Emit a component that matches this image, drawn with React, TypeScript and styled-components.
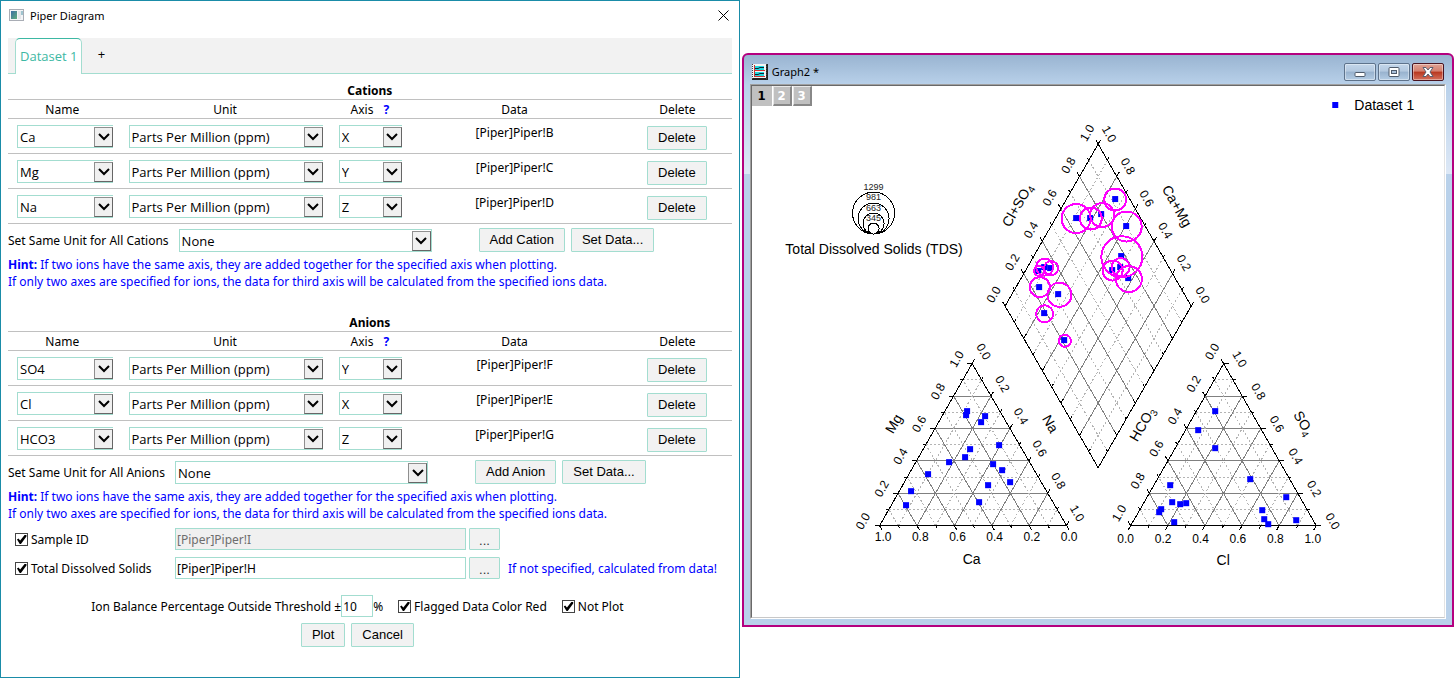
import React from "react";
import styled, { createGlobalStyle } from "styled-components";

const ui = `"Noto Sans", "Open Sans", sans-serif`;
const field = `"Open Sans", "Noto Sans", sans-serif`;
const arial = `"Liberation Sans", Arial, sans-serif`;
const mint = "#a3ddd0";

const GlobalStyle = createGlobalStyle`
  *, *::before, *::after { box-sizing: border-box; }
  body { margin: 0; background: #fff; color: #000; font: 12px/17px ${ui}; }
`;

/* ---------- shell ---------- */

const Desktop = styled.main`
  display: flex;
  align-items: flex-start;
  gap: 2px;
`;

const Dialog = styled.section`
  flex: 740 1 0;
  min-width: 0;
  min-height: 100vh;
  border: 1px solid #1a8ca8;
  padding: 0 7px 24px;
`;

const DialogTitle = styled.header`
  display: flex;
  align-items: center;
  gap: 6px;
  height: 28px;
  margin-bottom: 9px;
  padding-left: 1px;
  font-size: 11px;
`;

const DialogName = styled.h1`
  flex: 1;
  margin: 0;
  font: inherit;
`;

const CloseButton = styled.button`
  width: 17px;
  height: 17px;
  padding: 3px;
  border: 0;
  background: none;
  svg { display: block; }
`;

const Tabs = styled.nav`
  display: flex;
  height: 36px;
  padding-left: 7px;
  background: #f2f2f2;
  border-bottom: 1px solid ${mint};
`;

const Tab = styled.button`
  height: 36px;
  padding: 0 4px;
  border: 1px solid ${mint};
  border-top-color: #3db8a3;
  border-bottom: 0;
  border-radius: 5px 5px 0 0;
  background: #fff;
  color: #3db8a3;
  font: 13px/17px ${field};
`;

const AddTab = styled.button`
  width: 38px;
  height: 32px;
  padding: 0;
  border: 0;
  background: none;
  font: 13px/17px ${field};
`;

/* ---------- form controls ---------- */

const Button = styled.button`
  height: 24px;
  padding: 0 10px;
  border: 1px solid ${mint};
  border-radius: 1px;
  background: #f2f2f2;
  color: #000;
  font: 13px/20px ${arial};
  white-space: nowrap;
`;

const BrowseButton = styled(Button)`
  width: 31px;
  height: 22px;
  margin-left: 3px;
  padding: 2px 0 0;
  line-height: 20px;
  color: #333;
`;

const SelectFrame = styled.span<{ $width: number; $closed?: boolean }>`
  position: relative;
  display: block;
  width: ${(p) => p.$width}px;
  height: 23px;
  border: 1px solid ${mint};
  border-right-width: ${(p) => (p.$closed ? 1 : 0)}px;
  background: #fff;
`;

const NativeSelect = styled.select`
  appearance: none;
  display: block;
  width: 100%;
  height: 21px;
  margin: 0;
  padding: 2px 20px 0 2px;
  border: 0;
  background: transparent;
  color: #000;
  font: 13px/19px ${field};
`;

const Arrow = styled.span`
  position: absolute;
  top: 1px;
  right: 0;
  display: grid;
  place-items: center;
  width: 19px;
  height: 20px;
  border: 1px solid;
  border-color: #8f8f8f #666 #666 #8f8f8f;
  background: #f0f0f0;
  pointer-events: none;
`;

const TextInput = styled.input`
  width: 100%;
  height: 22px;
  padding: 1px 1px 0;
  border: 1px solid ${mint};
  border-radius: 0;
  background: #fff;
  color: #000;
  font: 12px/18px ${ui};
  &:disabled { background: #f0f0f0; color: #6d6d6d; }
`;

const CheckLabel = styled.label`
  display: flex;
  align-items: center;
  gap: 3px;
  white-space: nowrap;
`;

const Check = styled.input.attrs({ type: "checkbox" })`
  appearance: none;
  flex: none;
  width: 13px;
  height: 13px;
  margin: 1px 0 0;
  border: 1px solid #444;
  background: #fff;
  &:checked::after {
    content: "";
    display: block;
    width: 11px;
    height: 11px;
    background: #000;
    clip-path: polygon(9% 50%, 22% 42%, 38% 60%, 78% 9%, 95% 9%, 95% 22%, 45% 91%, 34% 91%);
  }
`;

/* ---------- ion tables ---------- */

const Section = styled.section`
  margin-top: 8px;
  & + & { margin-top: 24px; }
`;

const IonTable = styled.table`
  width: 100%;
  table-layout: fixed;
  border-collapse: collapse;
  caption {
    height: 17px;
    font-weight: 700;
  }
`;

const HeadCell = styled.th<{ $share: number }>`
  width: ${(p) => p.$share}%;
  height: 19px;
  padding: 0;
  border: 1px solid #c0c0c0;
  border-width: 1px 0;
  font-weight: 400;
`;

const Cell = styled.td<{ $indent?: number; $top?: boolean }>`
  height: 35px;
  padding: ${(p) => (p.$top ? 5 : 0)}px 0 0 ${(p) => p.$indent ?? 0}px;
  border-bottom: 1px solid #c0c0c0;
  text-align: ${(p) => (p.$indent ? "left" : "center")};
  vertical-align: ${(p) => (p.$top ? "top" : "middle")};
`;

const DeleteCell = styled(Cell)`
  padding: 3px 1px 0 0;
  button { display: block; margin: 0 auto; }
`;

const Help = styled.a`
  margin-left: 10px;
  color: #00f;
  font-weight: 700;
  text-decoration: none;
`;

const SameUnit = styled.div`
  display: flex;
  align-items: center;
  height: 24px;
  margin-top: 4px;
  white-space: nowrap;
`;

const SameUnitLabel = styled.label`
  margin-right: 10px;
`;

const ButtonPair = styled.div`
  display: flex;
  gap: 6px;
  margin-left: 47px;
`;

const Hint = styled.p`
  margin: 4px 0 0;
  color: #00f;
  white-space: nowrap;
`;

/* ---------- lower form ---------- */

const Sources = styled.div`
  display: grid;
  gap: 7px;
  margin: 6px 0 16px;
  padding-left: 7px;
`;

const SourceRow = styled.div`
  display: grid;
  grid-template-columns: 160px 291px 34px auto;
  align-items: center;
  height: 22px;
`;

const Note = styled.span`
  padding-left: 8px;
  color: #00f;
  white-space: nowrap;
`;

const Options = styled.div`
  display: flex;
  justify-content: center;
  align-items: center;
  gap: 15px;
  padding-right: 25px;
`;

const Threshold = styled.label`
  display: flex;
  align-items: center;
  white-space: nowrap;
  input { width: 32px; }
`;

const Actions = styled.footer`
  display: flex;
  justify-content: center;
  gap: 6px;
  margin-top: 6px;
  padding-right: 25px;
`;

/* ---------- graph window ---------- */

const GraphWindow = styled.section`
  flex: 712 1 0;
  min-width: 0;
  margin-top: 53px;
  padding: 0 6px 6px;
  border: 2px solid #b4007f;
  border-radius: 6px 6px 0 0;
  background: linear-gradient(#99b4d1 0, #b9d1ea 30px, #dde8f6 119px, #b9d1ea 119px);
`;

const GraphTitle = styled.header`
  display: flex;
  align-items: center;
  gap: 2px;
  height: 29px;
  padding: 4px 2px 0;
  font-size: 11px;
  svg { display: block; }
`;

const GraphName = styled.h2`
  flex: 1;
  margin: 0 0 0 2px;
  font: inherit;
`;

const FrameButton = styled.button<{ $danger?: boolean }>`
  display: grid;
  place-items: center;
  width: 32px;
  height: 18px;
  padding: 0;
  border: 1px solid ${(p) => (p.$danger ? "#4a1420" : "#5e738c")};
  border-radius: 2px;
  background: ${(p) =>
    p.$danger
      ? "linear-gradient(#e0a294 0, #d4806f 45%, #b8371f 50%, #d4705c 100%)"
      : "linear-gradient(#c3d6ea 0, #b3c8df 45%, #98b2ce 50%, #b4cce4 100%)"};
  box-shadow: inset 0 0 0 1px rgba(255, 255, 255, 0.4);
`;

const Sheet = styled.div`
  position: relative;
  border: 1px solid;
  border-color: #a0a0a0 #fff #fff #a0a0a0;
  background: #fff;
`;

const SheetInner = styled.div`
  border: 1px solid;
  border-color: #696969 #e3e3e3 #c8c8c8 #696969;
`;

const Layers = styled.div`
  position: absolute;
  top: 1px;
  left: 1px;
  display: flex;
  gap: 1px;
`;

const Layer = styled.button<{ $active?: boolean }>`
  width: ${(p) => (p.$active ? 20 : 19)}px;
  height: 20px;
  padding: 0;
  border: solid;
  border-width: ${(p) => (p.$active ? "0" : "1px 2px 2px 1px")};
  border-color: #e8e8e8 #888 #888 #e8e8e8;
  background: #c0c0c0;
  color: ${(p) => (p.$active ? "#000" : "#fff")};
  font: 700 13px/16px "DejaVu Sans Condensed", "DejaVu Sans", sans-serif;
`;

const Chart = styled.svg`
  display: block;
  width: 100%;
  height: auto;
  font-family: ${arial};
`;

/* ---------- data ---------- */

type Ion = [name: string, axis: string, column: string];
const cations: Ion[] = [["Ca", "X", "B"], ["Mg", "Y", "C"], ["Na", "Z", "D"]];
const anions: Ion[] = [["SO4", "Y", "F"], ["Cl", "X", "E"], ["HCO3", "Z", "G"]];

type Pt = [number, number];

const cationPoints: Pt[] = [
  [967, 411], [966, 415], [985, 416], [981, 422], [999, 445], [970, 449], [965, 457], [949, 462],
  [993, 464], [1002, 470], [928, 474], [1010, 482], [988, 485], [911, 491], [979, 502], [906, 505],
];
const anionPoints: Pt[] = [
  [1215, 411], [1198, 430], [1215, 448], [1250, 479], [1170, 485], [1286, 497], [1172, 502], [1180, 504],
  [1186, 503], [1161, 509], [1159, 512], [1262, 510], [1174, 522], [1264, 519], [1268, 524], [1296, 520],
];
const diamondPoints: Pt[] = [
  [1115, 199], [1076, 218], [1090, 218], [1101, 214], [1126, 226], [1121, 256], [1120, 267], [1112, 270],
  [1128, 278], [1044, 267], [1050, 268], [1038, 271], [1039, 287], [1058, 294], [1044, 313], [1064, 340],
];
const bubbles: [number, number, number][] = [
  [1115, 199.5, 11], [1076, 218.5, 14.5], [1090.7, 218.5, 11], [1102, 215, 12], [1126.5, 226.5, 15],
  [1121.7, 256.7, 20.5], [1120.5, 267, 9], [1112.5, 270.5, 10], [1128.7, 279, 13], [1044.5, 267, 8.5],
  [1051, 268, 7], [1039, 271, 5], [1039.7, 287, 10], [1059.3, 294.7, 12], [1044.5, 313.7, 8.5], [1064.7, 340.7, 6],
];

/* ---------- chart ---------- */

const mix = (a: Pt, b: Pt, t: number): Pt => [a[0] + (b[0] - a[0]) * t, a[1] + (b[1] - a[1]) * t];
const steps = [1, 2, 3, 4, 5, 6, 7, 8, 9];
const allSteps = [0, ...steps, 10];
const seg = (a: Pt, b: Pt) => `M${a[0]} ${a[1]}L${b[0]} ${b[1]}`;

/* Lines joining equal fractions of edge a0-a1 and edge b0-b1. */
function Grid({ a0, a1, b0, b1 }: { a0: Pt; a1: Pt; b0: Pt; b1: Pt }) {
  return (
    <g shapeRendering="crispEdges" fill="none">
      {steps.map((i) => (
        <path
          key={i}
          d={seg(mix(a0, a1, i / 10), mix(b0, b1, i / 10))}
          stroke={i % 2 ? "#b4b4b4" : "#808080"}
          strokeDasharray={i % 2 ? "2 2" : undefined}
        />
      ))}
    </g>
  );
}

function Ticks({ from, to, dir }: { from: Pt; to: Pt; dir: Pt }) {
  return (
    <path
      shapeRendering="crispEdges"
      stroke="#000"
      d={allSteps
        .map((i) => {
          const p = mix(from, to, i / 10);
          const len = i % 2 ? 3 : 5;
          return seg(p, [p[0] + dir[0] * len, p[1] + dir[1] * len]);
        })
        .join("")}
    />
  );
}

function Scale({ from, to, angle, reverse }: { from: Pt; to: Pt; angle: number; reverse?: boolean }) {
  return (
    <g fontSize="12" textAnchor="middle">
      {[0, 2, 4, 6, 8, 10].map((i) => {
        const [x, y] = mix(from, to, i / 10);
        return (
          <text key={i} transform={`translate(${x} ${y}) rotate(${angle})`} y="4">
            {((reverse ? 10 - i : i) / 10).toFixed(1)}
          </text>
        );
      })}
    </g>
  );
}

function AxisTitle({ at, angle, sub, children }: { at: Pt; angle: number; sub?: string; children: string }) {
  return (
    <text fontSize="14" textAnchor="middle" transform={`translate(${at[0]} ${at[1]}) rotate(${angle})`} y="5">
      {children}
      {sub && <tspan fontSize="10" dy="3">{sub}</tspan>}
    </text>
  );
}

function Markers({ points }: { points: Pt[] }) {
  return (
    <g fill="#00f">
      {points.map(([x, y], i) => (
        <rect key={i} x={x - 3} y={y - 3} width="6" height="6" />
      ))}
    </g>
  );
}

const upLeft: Pt = [-0.5, -0.866];
const upRight: Pt = [0.5, -0.866];
const downLeft: Pt = [-0.5, 0.866];
const downRight: Pt = [0.5, 0.866];

function Outline({ points }: { points: Pt[] }) {
  return <polygon points={points.join(" ")} fill="none" stroke="#000" shapeRendering="crispEdges" />;
}

function PiperChart() {
  const cl: Pt = [879.5, 525.5], cr: Pt = [1066.5, 525.5], ct: Pt = [972, 363.5];
  const al: Pt = [1130.5, 525.5], ar: Pt = [1316, 525.5], at: Pt = [1223.5, 363.5];
  const dt: Pt = [1098, 144], dl: Pt = [1005, 306], dr: Pt = [1191, 306], db: Pt = [1098, 467.5];
  return (
    <Chart viewBox="752 86 692 531" role="img" aria-label="Piper diagram of Dataset 1">
      <Grid a0={cl} a1={ct} b0={cr} b1={ct} />
      <Grid a0={cl} a1={cr} b0={ct} b1={cr} />
      <Grid a0={cr} a1={cl} b0={ct} b1={cl} />
      <Grid a0={al} a1={at} b0={ar} b1={at} />
      <Grid a0={al} a1={ar} b0={at} b1={ar} />
      <Grid a0={ar} a1={al} b0={at} b1={al} />
      <Grid a0={dt} a1={dl} b0={dr} b1={db} />
      <Grid a0={dt} a1={dr} b0={dl} b1={db} />
      <Outline points={[cl, ct, cr]} />
      <Outline points={[al, at, ar]} />
      <Outline points={[dt, dr, db, dl]} />
      <Ticks from={cl} to={ct} dir={[-1, 0]} />
      <Ticks from={ct} to={cr} dir={upRight} />
      <Ticks from={cl} to={cr} dir={downRight} />
      <Ticks from={al} to={at} dir={upLeft} />
      <Ticks from={at} to={ar} dir={[1, 0]} />
      <Ticks from={al} to={ar} dir={downLeft} />
      <Ticks from={dt} to={dl} dir={upLeft} />
      <Ticks from={dt} to={dr} dir={upRight} />
      <Ticks from={dl} to={db} dir={upRight} />
      <Ticks from={dr} to={db} dir={upLeft} />

      <Scale from={[1087, 133]} to={[993.5, 294.5]} angle={-60} reverse />
      <Scale from={[1109, 134]} to={[1202.5, 295]} angle={60} reverse />
      <Scale from={[956.5, 359]} to={[863, 521]} angle={-60} reverse />
      <Scale from={[983.5, 351.5]} to={[1077, 513]} angle={60} />
      <Scale from={[883, 537]} to={[1069, 537]} angle={0} reverse />
      <Scale from={[1212, 351.5]} to={[1119, 513]} angle={-60} />
      <Scale from={[1239.5, 359]} to={[1332.5, 521]} angle={60} reverse />
      <Scale from={[1125.5, 539]} to={[1312.5, 539]} angle={0} />

      <AxisTitle at={[1017, 205]} angle={-60} sub="4">Cl+SO</AxisTitle>
      <AxisTitle at={[1177, 206]} angle={60}>Ca+Mg</AxisTitle>
      <AxisTitle at={[893.5, 423.5]} angle={-60}>Mg</AxisTitle>
      <AxisTitle at={[1050.5, 423.5]} angle={60}>Na</AxisTitle>
      <AxisTitle at={[971.5, 559]} angle={0}>Ca</AxisTitle>
      <AxisTitle at={[1142, 424]} angle={-60} sub="3">HCO</AxisTitle>
      <AxisTitle at={[1303.5, 423]} angle={60} sub="4">SO</AxisTitle>
      <AxisTitle at={[1223, 560]} angle={0}>Cl</AxisTitle>

      <Markers points={cationPoints} />
      <Markers points={anionPoints} />
      <Markers points={diamondPoints} />
      <g fill="none" stroke="#f0f" strokeWidth="2" shapeRendering="crispEdges">
        {bubbles.map(([x, y, r], i) => <circle key={i} cx={x} cy={y} r={r} />)}
      </g>

      <g fill="none" stroke="#000" shapeRendering="crispEdges">
        {[21, 15.5, 10.5, 5.5].map((r) => <circle key={r} cx="873.5" cy={234 - r} r={r} />)}
      </g>
      <g fontSize="9" textAnchor="middle" fill="#222">
        {["1299", "981", "663", "345"].map((t, i) => <text key={t} x="873.5" y={190 + i * 10.3}>{t}</text>)}
      </g>
      <text x="874" y="254" fontSize="14" textAnchor="middle">Total Dissolved Solids (TDS)</text>

      <Markers points={[[1335, 105]]} />
      <text x="1354" y="110" fontSize="14">Dataset 1</text>
    </Chart>
  );
}

/* ---------- pieces ---------- */

function Select({ value, label, id, width, closed }: { value: string; label?: string; id?: string; width: number; closed?: boolean }) {
  return (
    <SelectFrame $width={width} $closed={closed}>
      <NativeSelect id={id} aria-label={label} defaultValue={value}>
        <option>{value}</option>
      </NativeSelect>
      <Arrow>
        <svg width="12" height="8" viewBox="0 0 12 8" fill="none" stroke="#000" strokeWidth="2">
          <path d="M1 1l5 5 5-5" />
        </svg>
      </Arrow>
    </SelectFrame>
  );
}

function IonSection({ title, kind, ions }: { title: string; kind: string; ions: Ion[] }) {
  const id = `unit-${kind}`;
  return (
    <Section>
      <IonTable>
        <caption>{title}</caption>
        <thead>
          <tr>
            <HeadCell $share={15}>Name</HeadCell>
            <HeadCell $share={30}>Unit</HeadCell>
            <HeadCell $share={10}>Axis<Help href="#axis">?</Help></HeadCell>
            <HeadCell $share={30}>Data</HeadCell>
            <HeadCell $share={15}>Delete</HeadCell>
          </tr>
        </thead>
        <tbody>
          {ions.map(([name, axis, column]) => (
            <tr key={name}>
              <Cell $indent={9}><Select label="Name" value={name} width={96} /></Cell>
              <Cell $indent={12}><Select label="Unit" value="Parts Per Million (ppm)" width={194} /></Cell>
              <Cell $indent={5}><Select label="Axis" value={axis} width={63} /></Cell>
              <Cell $top>[Piper]Piper!{column}</Cell>
              <DeleteCell><Button>Delete</Button></DeleteCell>
            </tr>
          ))}
        </tbody>
      </IonTable>
      <SameUnit>
        <SameUnitLabel htmlFor={id}>Set Same Unit for All {title}</SameUnitLabel>
        <Select id={id} value="None" width={253} closed />
        <ButtonPair>
          <Button>Add {kind}</Button>
          <Button>Set Data...</Button>
        </ButtonPair>
      </SameUnit>
      <Hint>
        <b>Hint:</b> If two ions have the same axis, they are added together for the specified axis when plotting.
        <br />
        If only two axes are specified for ions, the data for third axis will be calculated from the specified ions data.
      </Hint>
    </Section>
  );
}

export default function App() {
  return (
    <>
      <GlobalStyle />
      <Desktop>
        <Dialog>
          <DialogTitle>
            <svg width="15" height="12" viewBox="0 0 15 12">
              <defs>
                <linearGradient id="pane" x1="0" y1="0" x2="1" y2="1">
                  <stop offset="0" stopColor="#3c6ea5" />
                  <stop offset="1" stopColor="#5fae7c" />
                </linearGradient>
              </defs>
              <rect x=".5" y=".5" width="14" height="11" fill="#f4f5f7" stroke="#a9adb5" />
              <rect x="2" y="2" width="6" height="8" fill="url(#pane)" />
              <rect x="9" y="2" width="3" height="8" fill="#e3e6ea" />
              <rect x="12" y="2" width="2" height="4" fill="#9fc4cf" />
            </svg>
            <DialogName>Piper Diagram</DialogName>
            <CloseButton aria-label="Close">
              <svg width="11" height="11" viewBox="0 0 11 11" stroke="#000">
                <path d="M.5.5l10 10M10.5.5l-10 10" />
              </svg>
            </CloseButton>
          </DialogTitle>
          <Tabs>
            <Tab>Dataset 1</Tab>
            <AddTab>+</AddTab>
          </Tabs>
          <IonSection title="Cations" kind="Cation" ions={cations} />
          <IonSection title="Anions" kind="Anion" ions={anions} />
          <Sources>
            <SourceRow>
              <CheckLabel><Check defaultChecked />Sample ID</CheckLabel>
              <TextInput aria-label="Sample ID data" defaultValue="[Piper]Piper!I" disabled />
              <BrowseButton>...</BrowseButton>
            </SourceRow>
            <SourceRow>
              <CheckLabel><Check defaultChecked />Total Dissolved Solids</CheckLabel>
              <TextInput aria-label="Total Dissolved Solids data" defaultValue="[Piper]Piper!H" />
              <BrowseButton>...</BrowseButton>
              <Note>If not specified, calculated from data!</Note>
            </SourceRow>
          </Sources>
          <Options>
            <Threshold>
              Ion Balance Percentage Outside Threshold ±
              <TextInput defaultValue="10" />%
            </Threshold>
            <CheckLabel><Check defaultChecked />Flagged Data Color Red</CheckLabel>
            <CheckLabel><Check defaultChecked />Not Plot</CheckLabel>
          </Options>
          <Actions>
            <Button>Plot</Button>
            <Button>Cancel</Button>
          </Actions>
        </Dialog>

        <GraphWindow>
          <GraphTitle>
            <svg width="16" height="16" viewBox="0 0 16 16">
              <rect x="0" y="0" width="16" height="16" fill="#222" />
              <rect x="0" y="0" width="14" height="14" fill="#f4f4f4" />
              <path d="M.5 0v15M14.500 0v15" stroke="#444" strokeDasharray="1 1" />
              <rect x="3" y="2" width="9" height="4" fill="#20d8e0" />
              <rect x="3" y="8" width="9" height="4" fill="#20d8e0" />
              <path d="M3 4.500h3l2-1h4M3 10.500h3l2-1h4" stroke="#123" fill="none" />
              <path d="M2.500 1v12M3 6.500h10M3 12.500h10" stroke="#c33" fill="none" />
            </svg>
            <GraphName>Graph2 *</GraphName>
            <FrameButton aria-label="Minimize">
              <svg width="12" height="10" viewBox="0 0 12 10">
                <rect x="1" y="5.500" width="10" height="4" rx="1" fill="#fff" stroke="#4f5b6b" />
              </svg>
            </FrameButton>
            <FrameButton aria-label="Maximize">
              <svg width="12" height="10" viewBox="0 0 12 10">
                <rect x="1" y=".5" width="10" height="9" rx="1" fill="#fff" stroke="#4f5b6b" />
                <rect x="3.500" y="3.500" width="5" height="3" fill="#a9c0da" stroke="#4f5b6b" />
              </svg>
            </FrameButton>
            <FrameButton aria-label="Close graph" $danger>
              <svg width="12" height="10" viewBox="0 0 12 10">
                <path d="M1 .5h3l2 2.500 2-2.500h3L8 5l3 4.500H8L6 7 4 9.500H1L4 5z" fill="#fff" stroke="#5a5f70" />
              </svg>
            </FrameButton>
          </GraphTitle>
          <Sheet>
            <SheetInner>
              <PiperChart />
            </SheetInner>
            <Layers>
              <Layer $active>1</Layer>
              <Layer>2</Layer>
              <Layer>3</Layer>
            </Layers>
          </Sheet>
        </GraphWindow>
      </Desktop>
    </>
  );
}
